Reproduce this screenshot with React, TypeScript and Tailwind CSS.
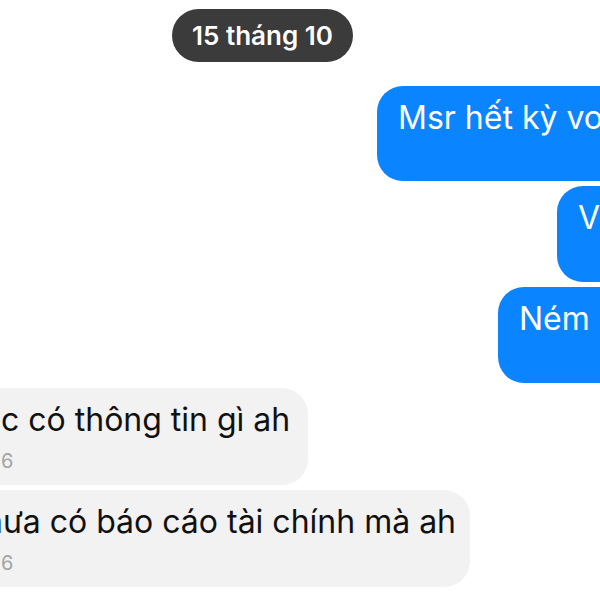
export default function App() {
  return (
    <div
      className="w-[600px] h-[600px] overflow-hidden bg-white"
      style={{ fontFamily: "Inter, 'Noto Sans', sans-serif" }}
    >
      <div className="flex pl-[172px] pt-[9px]">
        <div className="flex h-[53px] w-[181px] items-center justify-center rounded-full bg-[#3b3b3b] text-[26px] font-semibold text-white">
          15 tháng 10
        </div>
      </div>

      <div className="mt-[24px] flex flex-col gap-[5px]">
        <div className="flex justify-end">
          <div className="-mr-[66px] h-[95px] w-[289px] overflow-hidden rounded-[26px] bg-[#0a84ff] px-[21px] pt-[12px] text-white">
            <p className="whitespace-nowrap text-[32px] leading-[40px]">Msr hết kỳ vo</p>
            <p className="text-right text-[18px] leading-[24px] text-white/40">15:36</p>
          </div>
        </div>

        <div className="flex justify-end">
          <div className="-mr-[66px] h-[96px] w-[109px] overflow-hidden rounded-[26px] bg-[#0a84ff] px-[21px] pt-[12px] text-white">
            <p className="whitespace-nowrap text-[32px] leading-[40px]">Ve</p>
            <p className="text-right text-[18px] leading-[24px] text-white/40">15:36</p>
          </div>
        </div>

        <div className="flex justify-end">
          <div className="-mr-[66px] h-[96px] w-[168px] overflow-hidden rounded-[26px] bg-[#0a84ff] px-[21px] pt-[12px] text-white">
            <p className="whitespace-nowrap text-[32px] leading-[40px]">Ném luôn</p>
            <p className="text-right text-[18px] leading-[24px] text-white/40">15:36</p>
          </div>
        </div>

        <div className="flex justify-start">
          <div className="-ml-[40px] h-[97px] w-[348px] overflow-hidden rounded-[26px] bg-[#f2f2f2] pl-[41px] pr-[21px] pt-[12px] text-[#111]">
            <p className="whitespace-nowrap text-[32px] leading-[40px]">c có thông tin gì ah</p>
            <p className="mt-[9px] text-[20px] leading-[24px] text-[#a3a3a3]">6</p>
          </div>
        </div>

        <div className="flex justify-start">
          <div className="-ml-[40px] h-[97px] w-[510px] overflow-hidden rounded-[26px] bg-[#f2f2f2] pl-[41px] pr-[21px] pt-[12px] text-[#111]">
            <p className="-ml-[17px] whitespace-nowrap text-[32px] leading-[40px]">hưa có báo cáo tài chính mà ah</p>
            <p className="mt-[9px] text-[20px] leading-[24px] text-[#a3a3a3]">6</p>
          </div>
        </div>
      </div>
    </div>
  );
}
